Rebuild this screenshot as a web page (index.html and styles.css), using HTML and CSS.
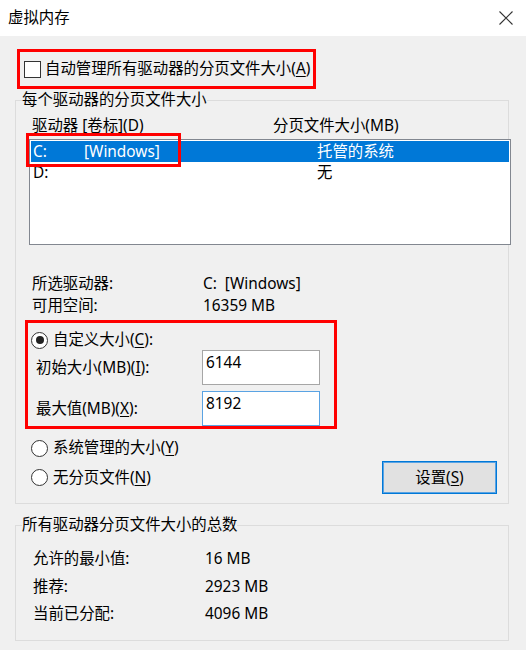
FILE: index.html
```html
<!DOCTYPE html>
<html lang="zh-CN">
<head>
<meta charset="utf-8">
<title>虚拟内存</title>
<link rel="stylesheet" href="styles.css">
</head>
<body>
<div class="titlebar">
  <span class="title">虚拟内存</span>
  <svg class="close" width="14" height="14" viewBox="0 0 14 14"><path d="M0.5 0.5 L13.5 13.5 M13.5 0.5 L0.5 13.5" stroke="#333" stroke-width="1.1" fill="none"/></svg>
</div>
<div class="content">
  <div class="auto mark">
    <span class="checkbox"></span>
    <span>自动管理所有驱动器的分页文件大小(<u>A</u>)</span>
  </div>

  <fieldset class="group group1">
    <legend>每个驱动器的分页文件大小</legend>
    <div class="cols">
      <span class="col1">驱动器 [卷标](<u>D</u>)</span>
      <span>分页文件大小(MB)</span>
    </div>
    <div class="list">
      <div class="row selected"><span>C:</span><span>[Windows]</span><span>托管的系统</span></div>
      <div class="row"><span>D:</span><span></span><span>无</span></div>
      <div class="rowmark"></div>
    </div>
    <div class="info">
      <span>所选驱动器:</span><span>C:&nbsp; [Windows]</span>
      <span>可用空间:</span><span>16359 MB</span>
    </div>
    <div class="custom mark">
      <div class="radio-row">
        <span class="radio checked"></span>
        <span>自定义大小(<u>C</u>):</span>
      </div>
      <div class="field">
        <span>初始大小(MB)(<u>I</u>):</span>
        <div class="input">6144</div>
      </div>
      <div class="field field2">
        <span>最大值(MB)(<u>X</u>):</span>
        <div class="input focused">8192</div>
      </div>
    </div>
    <div class="radio-row sysrow">
      <span class="radio"></span>
      <span>系统管理的大小(<u>Y</u>)</span>
    </div>
    <div class="row2">
      <div class="radio-row">
        <span class="radio"></span>
        <span>无分页文件(<u>N</u>)</span>
      </div>
      <div class="button">设置(<u>S</u>)</div>
    </div>
  </fieldset>

  <fieldset class="group group2">
    <legend>所有驱动器分页文件大小的总数</legend>
    <div class="totals">
      <span>允许的最小值:</span><span>16 MB</span>
      <span>推荐:</span><span>2923 MB</span>
      <span>当前已分配:</span><span>4096 MB</span>
    </div>
  </fieldset>
</div>
</body>
</html>
```

FILE: styles.css
```css
* { box-sizing: border-box; }
html, body {
  margin: 0;
  padding: 0;
}
body {
  width: 526px;
  height: 650px;
  background: #f0f0f0;
  font-family: "Noto Sans", "Noto Sans CJK SC", sans-serif;
  font-size: 15.4px;
  color: #000;
  line-height: 20px;
  overflow: hidden;
}
u { text-decoration: underline; text-underline-offset: 2px; text-decoration-thickness: 1px; }

.titlebar {
  height: 36px;
  background: #fff;
  display: flex;
  align-items: center;
  justify-content: space-between;
  padding: 0 13px 0 8px;
}
.title { font-size: 15.4px; }
.close { display: block; }

.content {
  padding: 0 17px 0 15px;
}

.mark { border: 3px solid #ff0000; }

.auto {
  margin: 13px 0 0 2px;
  width: 299px;
  height: 40px;
  display: flex;
  align-items: center;
  padding-left: 4px;
  gap: 4px;
}
.checkbox {
  width: 17px;
  height: 17px;
  border: 1px solid #333;
  background: #fff;
  flex: none;
}

.group {
  margin: 0;
  border: 1px solid #dcdcdc;
  min-width: 0;
  padding: 0;
}
.group legend {
  padding: 0;
  margin-left: 6px;
  line-height: 20px;
}
.group1 {
  margin-top: 1px;
  padding: 6px 0 9px 0;
}

.cols {
  display: flex;
  padding-left: 16px;
}
.col1 { width: 241px; }

.list {
  position: relative;
  margin: 3px 0 0 13px;
  width: 482px;
  height: 106px;
  border: 1px solid #828790;
  background: #fff;
  padding: 1px;
}
.row {
  display: grid;
  grid-template-columns: 51px 233px 1fr;
  height: 21px;
  line-height: 21px;
  padding-left: 2px;
}
.row.selected {
  background: #0078d7;
  color: #fff;
}
.rowmark {
  position: absolute;
  left: -4px;
  top: -7px;
  width: 155px;
  height: 34px;
  border: 3px solid #ff0000;
}

.info {
  display: grid;
  grid-template-columns: 171px 1fr;
  margin: 28px 0 0 16px;
  line-height: 22px;
}

.custom {
  margin: 3px 0 0 9px;
  width: 312px;
  height: 109px;
  padding: 7px 0 0 3px;
}
.radio-row {
  display: flex;
  align-items: center;
  gap: 5px;
  line-height: 20px;
}
.radio {
  width: 17px;
  height: 17px;
  border: 1px solid #333;
  border-radius: 50%;
  background: #fff;
  flex: none;
  display: flex;
  align-items: center;
  justify-content: center;
}
.radio.checked::after {
  content: "";
  width: 8px;
  height: 8px;
  border-radius: 50%;
  background: #222;
}
.field {
  display: grid;
  grid-template-columns: 166px 118px;
  align-items: center;
  padding-left: 5px;
}
.field2 { margin-top: 6px; }
.input {
  height: 35px;
  background: #fff;
  border: 1px solid #a6a6a6;
  padding: 2px 3px;
  line-height: 20px;
}
.input.focused { border-color: #5aa3e3; }

.sysrow {
  margin: 9px 0 0 15px;
}
.row2 {
  display: flex;
  align-items: center;
  justify-content: space-between;
  margin: 3px 11px 0 15px;
}
.button {
  width: 115px;
  height: 33px;
  background: #e1e1e1;
  border: 1px solid #0078d7;
  box-shadow: inset 0 0 0 1px #5aa3e3;
  display: flex;
  align-items: center;
  justify-content: center;
}

.group2 {
  margin-top: 11px;
  padding: 10px 0 12px 0;
}
.totals {
  display: grid;
  grid-template-columns: 172px 1fr;
  margin-left: 17px;
  line-height: 27.5px;
}
```
